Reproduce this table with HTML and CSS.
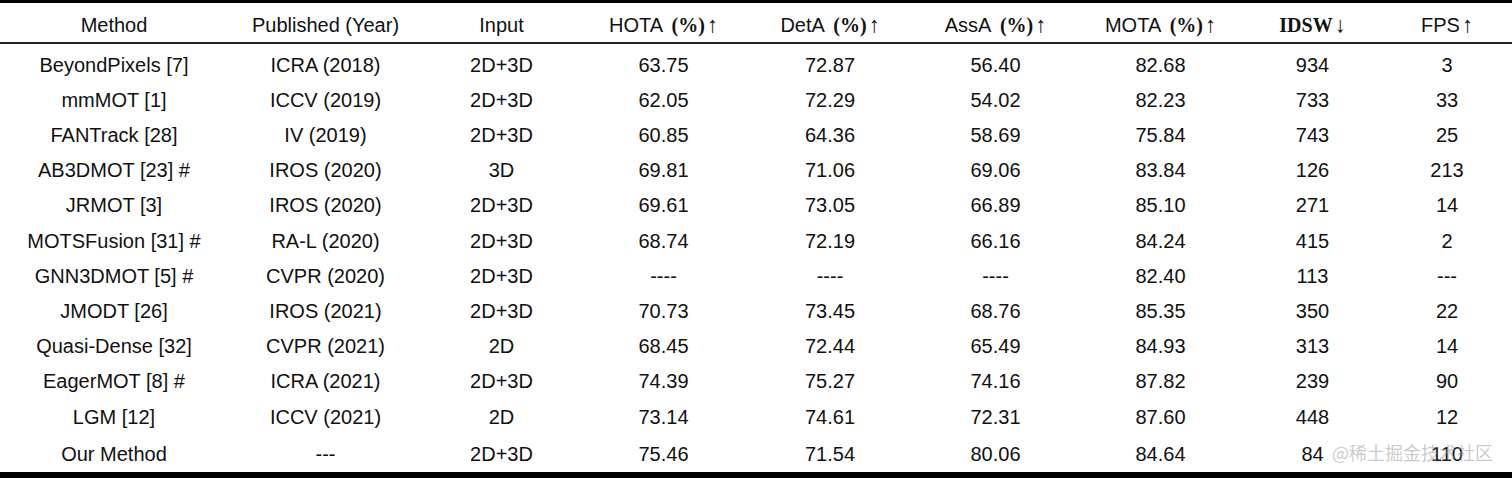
FILE: index.html
```html
<!DOCTYPE html>
<html lang="en">
<head>
<meta charset="utf-8">
<title>Tracking results</title>
<link rel="stylesheet" href="styles.css">
</head>
<body>
<div class="page">
<table class="results">
  <colgroup>
    <col class="c-method"><col class="c-pub"><col class="c-input"><col class="c-hota"><col class="c-deta"><col class="c-assa"><col class="c-mota"><col class="c-idsw"><col class="c-fps">
  </colgroup>
  <thead>
    <tr>
      <th>Method</th>
      <th>Published (Year)</th>
      <th>Input</th>
      <th>HOTA <span class="pct">(%)</span><span class="arr">↑</span></th>
      <th>DetA <span class="pct">(%)</span><span class="arr">↑</span></th>
      <th>AssA <span class="pct">(%)</span><span class="arr">↑</span></th>
      <th>MOTA <span class="pct">(%)</span><span class="arr">↑</span></th>
      <th><span class="bold-serif">IDSW</span><span class="arr">↓</span></th>
      <th>FPS<span class="arr">↑</span></th>
    </tr>
  </thead>
  <tbody>
    <tr class="first"><td>BeyondPixels [7]</td><td>ICRA (2018)</td><td>2D+3D</td><td>63.75</td><td>72.87</td><td>56.40</td><td>82.68</td><td>934</td><td>3</td></tr>
    <tr><td>mmMOT [1]</td><td>ICCV (2019)</td><td>2D+3D</td><td>62.05</td><td>72.29</td><td>54.02</td><td>82.23</td><td>733</td><td>33</td></tr>
    <tr><td>FANTrack [28]</td><td>IV (2019)</td><td>2D+3D</td><td>60.85</td><td>64.36</td><td>58.69</td><td>75.84</td><td>743</td><td>25</td></tr>
    <tr><td>AB3DMOT [23] #</td><td>IROS (2020)</td><td>3D</td><td>69.81</td><td>71.06</td><td>69.06</td><td>83.84</td><td>126</td><td>213</td></tr>
    <tr><td>JRMOT [3]</td><td>IROS (2020)</td><td>2D+3D</td><td>69.61</td><td>73.05</td><td>66.89</td><td>85.10</td><td>271</td><td>14</td></tr>
    <tr><td>MOTSFusion [31] #</td><td>RA-L (2020)</td><td>2D+3D</td><td>68.74</td><td>72.19</td><td>66.16</td><td>84.24</td><td>415</td><td>2</td></tr>
    <tr><td>GNN3DMOT [5] #</td><td>CVPR (2020)</td><td>2D+3D</td><td>----</td><td>----</td><td>----</td><td>82.40</td><td>113</td><td>---</td></tr>
    <tr><td>JMODT [26]</td><td>IROS (2021)</td><td>2D+3D</td><td>70.73</td><td>73.45</td><td>68.76</td><td>85.35</td><td>350</td><td>22</td></tr>
    <tr><td>Quasi-Dense [32]</td><td>CVPR (2021)</td><td>2D</td><td>68.45</td><td>72.44</td><td>65.49</td><td>84.93</td><td>313</td><td>14</td></tr>
    <tr><td>EagerMOT [8] #</td><td>ICRA (2021)</td><td>2D+3D</td><td>74.39</td><td>75.27</td><td>74.16</td><td>87.82</td><td>239</td><td>90</td></tr>
    <tr><td>LGM [12]</td><td>ICCV (2021)</td><td>2D</td><td>73.14</td><td>74.61</td><td>72.31</td><td>87.60</td><td>448</td><td>12</td></tr>
    <tr class="last"><td>Our Method</td><td>---</td><td>2D+3D</td><td>75.46</td><td>71.54</td><td>80.06</td><td>84.64</td><td>84</td><td>110</td></tr>
  </tbody>
</table>
<div class="watermark">@稀土掘金技术社区</div>
</div>
</body>
</html>
```

FILE: styles.css
```css
html, body {
  margin: 0;
  padding: 0;
  background: #fff;
  overflow: hidden;
}

.page {
  position: relative;
  width: 1512px;
  height: 478px;
  overflow: hidden;
}

.results {
  border-collapse: separate;
  border-spacing: 0;
  table-layout: fixed;
  width: 1512px;
  font-family: "Liberation Sans", Arial, sans-serif;
  font-size: 20px;
  color: #111;
}

.c-method { width: 228px; }
.c-pub { width: 195px; }
.c-input { width: 157px; }
.c-hota { width: 167px; }
.c-deta { width: 166px; }
.c-assa { width: 165px; }
.c-mota { width: 165px; }
.c-idsw { width: 139px; }
.c-fps { width: 130px; }

.results th {
  font-weight: normal;
  text-align: center;
  white-space: nowrap;
  line-height: 23px;
  padding: 11px 0 5px;
  border-top: 3px solid #000;
  border-bottom: 2px solid #222;
}

.results td {
  text-align: center;
  white-space: nowrap;
  line-height: 35.17px;
  padding: 0;
}

.results tr.first td {
  padding-top: 3.8px;
}

.results tr.last td {
  padding-top: 2.5px;
  border-bottom: 6px solid #000;
}

.pct,
.bold-serif {
  font-family: "Liberation Serif", "Times New Roman", serif;
  font-weight: bold;
}

.pct {
  margin-left: 4px;
}

.arr {
  font-family: "Liberation Serif", "Times New Roman", serif;
  font-size: 22px;
  line-height: 1;
  margin-left: 2px;
}

.watermark {
  position: absolute;
  right: 19px;
  top: 440px;
  font-family: "Noto Sans CJK SC", sans-serif;
  font-size: 18px;
  line-height: 24px;
  color: rgba(150, 150, 150, 0.5);
  white-space: nowrap;
}
```
